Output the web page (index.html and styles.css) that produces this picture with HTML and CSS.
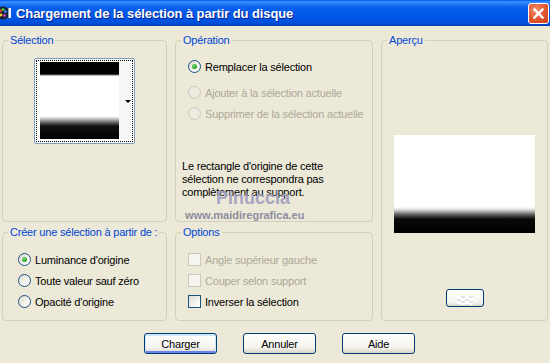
FILE: index.html
```html
<!DOCTYPE html>
<html lang="fr">
<head>
<meta charset="utf-8">
<title>Chargement de la sélection à partir du disque</title>
<link rel="stylesheet" href="styles.css">
</head>
<body>
<div class="window">
  <div class="titlebar">
    <span class="app-icon">
      <svg width="14" height="16" viewBox="0 0 14 16">
        <circle cx="5" cy="8" r="6.5" fill="#1b1f2e"/>
        <circle cx="2.5" cy="6" r="1.6" fill="#e23a3a"/>
        <circle cx="5" cy="4.5" r="1.5" fill="#3fcf3f"/>
        <circle cx="7.5" cy="6.5" r="1.5" fill="#3f7cff"/>
        <circle cx="3" cy="10" r="1.4" fill="#f0d030"/>
        <circle cx="6.5" cy="10.5" r="1.4" fill="#d040d0"/>
        <rect x="10" y="3" width="3" height="10" fill="#f4f4f4"/>
        <rect x="10" y="3" width="1" height="10" fill="#9aa4b8"/>
      </svg>
    </span>
    <span class="title">Chargement de la sélection à partir du disque</span>
    <span class="close">
      <svg width="11" height="11" viewBox="0 0 11 11"><path d="M1.5 1.5 L9.5 9.5 M9.5 1.5 L1.5 9.5" stroke="#fff" stroke-width="2.4" stroke-linecap="square"/></svg>
    </span>
  </div>

  <div class="groups">
    <fieldset class="group g-sel">
      <legend>Sélection</legend>
      <div class="thumb">
        <div class="focus">
          <div class="thumb-img"></div>
          <div class="thumb-strip"><span class="arrow"></span></div>
        </div>
      </div>
    </fieldset>

    <fieldset class="group g-op">
      <legend>Opération</legend>
      <div class="list op-list">
        <div class="row first"><span class="radio checked"></span><span>Remplacer la sélection</span></div>
        <div class="row disabled"><span class="radio"></span><span>Ajouter à la sélection actuelle</span></div>
        <div class="row disabled"><span class="radio"></span><span>Supprimer de la sélection actuelle</span></div>
      </div>
      <p class="note">Le rectangle d'origine de cette<br>sélection ne correspondra pas<br>complètement au support.</p>
      <span class="wm-name">Pinuccia</span>
      <span class="wm-url">www.maidiregrafica.eu</span>
    </fieldset>

    <fieldset class="group g-prev">
      <legend>Aperçu</legend>
      <div class="preview"></div>
      <div class="mini-btn"><span class="checker"></span></div>
    </fieldset>

    <fieldset class="group g-create">
      <legend>Créer une sélection à partir de :</legend>
      <div class="list create-list">
        <div class="row"><span class="radio checked"></span><span>Luminance d'origine</span></div>
        <div class="row"><span class="radio"></span><span>Toute valeur sauf zéro</span></div>
        <div class="row"><span class="radio"></span><span>Opacité d'origine</span></div>
      </div>
    </fieldset>

    <fieldset class="group g-opt">
      <legend>Options</legend>
      <div class="list opt-list">
        <div class="row disabled"><span class="check"></span><span>Angle supérieur gauche</span></div>
        <div class="row disabled"><span class="check"></span><span>Couper selon support</span></div>
        <div class="row"><span class="check"></span><span>Inverser la sélection</span></div>
      </div>
    </fieldset>
  </div>

  <div class="buttons">
    <span class="btn default">Charger</span>
    <span class="btn">Annuler</span>
    <span class="btn">Aide</span>
  </div>
</div>
</body>
</html>
```

FILE: styles.css
```css
* { box-sizing: border-box; }
html, body { margin: 0; padding: 0; }
body {
  width: 550px;
  height: 363px;
  overflow: hidden;
  background: #ECE9D8;
  font-family: "Liberation Sans", Arial, sans-serif;
  font-size: 11px;
  letter-spacing: -0.2px;
  color: #000;
}
.window { width: 550px; height: 363px; background: #ECE9D8; }

.titlebar {
  height: 26px;
  display: flex;
  align-items: center;
  background: linear-gradient(to bottom, #0058EE 0%, #3D93FF 8%, #2A7DF8 14%, #0660ED 30%, #0055E5 70%, #0050DA 88%, #003FB8 100%);
  color: #fff;
}
.app-icon { width: 14px; height: 16px; margin-left: -2px; display: flex; }
.title {
  flex: 1;
  margin-left: 4px;
  font-weight: bold;
  font-size: 13px;
  letter-spacing: -0.1px;
  text-shadow: 1px 1px 0 #0A1E8C;
}
.close {
  width: 21px;
  height: 21px;
  margin-right: 1px;
  border: 1px solid #fff;
  border-radius: 3px;
  background: radial-gradient(circle at 35% 30%, #F3906A 0%, #E45C34 45%, #CC3F18 100%);
  display: flex;
  align-items: center;
  justify-content: center;
}

.groups {
  display: grid;
  grid-template-columns: 165px 198px 167px;
  grid-template-rows: 188px 95px;
  column-gap: 8px;
  row-gap: 4px;
  padding: 8px 0 0 2px;
}
.group {
  margin: 0;
  padding: 0;
  min-width: 0;
  border: 1px solid #D0D0BF;
  border-radius: 4px;
}
.group legend {
  margin-left: 5px;
  padding: 0 2px;
  color: #0046D5;
  line-height: 12px;
  white-space: nowrap;
}
.g-sel { grid-column: 1; grid-row: 1; }
.g-op { grid-column: 2; grid-row: 1; position: relative; }
.g-prev { grid-column: 3; grid-row: 1 / span 2; }
.g-create { grid-column: 1; grid-row: 2; }
.g-opt { grid-column: 2; grid-row: 2; }

/* thumbnail */
.thumb {
  width: 101px;
  height: 86px;
  margin: 12px 0 0 31px;
  border: 1px solid #7F9DB9;
  border-radius: 2px;
  background: #fff;
  padding: 1px;
}
.focus {
  width: 97px;
  height: 82px;
  border: 1px dotted #000;
  display: flex;
  padding: 1px 0 0 3px;
}
.thumb-img {
  width: 79px;
  height: 77px;
  background: linear-gradient(to bottom, #000 0, #000 12px, #777 13px, #fff 14px, #fff 54px, #d8d8d8 56px, #707070 60px, #111 64px, #000 100%);
}
.thumb-strip {
  width: 12px;
  height: 77px;
  background: #F6F6F6;
  display: flex;
  align-items: center;
  justify-content: flex-end;
}
.arrow {
  width: 0;
  height: 0;
  border-left: 3px solid transparent;
  border-right: 3px solid transparent;
  border-top: 3px solid #000;
  margin-top: 1px;
}

/* rows */
.row { height: 21px; display: flex; align-items: center; gap: 4px; white-space: nowrap; }
.row.disabled { color: #ACA899; }
.op-list { padding: 10px 0 0 12px; }
.op-list .row.first { margin-bottom: 5px; }
.create-list { padding: 11px 0 0 15px; }
.opt-list { padding: 11px 0 0 12px; }

.radio {
  flex: none;
  width: 13px;
  height: 13px;
  border-radius: 50%;
  border: 1px solid #1C5180;
  background: linear-gradient(135deg, #DCD8CB 0%, #F6F5F1 60%, #FFFFFF 100%);
  display: flex;
  align-items: center;
  justify-content: center;
}
.radio.checked::after {
  content: "";
  width: 5px;
  height: 5px;
  border-radius: 50%;
  background: radial-gradient(circle at 40% 35%, #7EE07E 0%, #2AA82A 60%, #1C8A1C 100%);
}
.row.disabled .radio {
  border-color: #CAC8BB;
  background: #EDEAE0;
}
.check {
  flex: none;
  width: 13px;
  height: 13px;
  border: 1px solid #1C5180;
  background: linear-gradient(135deg, #DCDCD5 0%, #F4F4F0 60%, #FFFFFF 100%);
}
.row.disabled .check {
  border-color: #CAC8BB;
  background: #F5F4EE;
}

.note {
  margin: 36px 0 0 6px;
  line-height: 13px;
}
.wm-name {
  position: absolute;
  left: 40px;
  top: 143px;
  font-size: 18px;
  font-weight: bold;
  line-height: 18px;
  letter-spacing: 0;
  color: #A19FC0;
  opacity: 0.92;
}
.wm-url {
  position: absolute;
  left: 9px;
  top: 163px;
  font-size: 11px;
  font-weight: bold;
  line-height: 13px;
  letter-spacing: 0;
  color: #8E8D9E;
}

/* preview */
.preview {
  width: 141px;
  height: 98px;
  margin: 89px auto 0;
  background: linear-gradient(to bottom, #fff 0, #fff 72px, #d4d4d4 75px, #555 80px, #0a0a0a 84px, #000 100%);
}
.mini-btn {
  width: 38px;
  height: 18px;
  margin: 56px auto 0;
  border: 1px solid #003C74;
  border-radius: 3px;
  background: linear-gradient(to bottom, #FFFFFF 0%, #F4F3EE 80%, #D8D2C6 100%);
  display: flex;
  justify-content: center;
  align-items: flex-end;
}
.checker {
  width: 16px;
  height: 9px;
  margin-bottom: 1px;
  background: repeating-conic-gradient(#E2E2E2 0 25%, #FFFFFF 0 50%) 0 0 / 8px 5px;
}

/* bottom buttons */
.buttons {
  display: flex;
  gap: 26px;
  padding: 12px 0 0 144px;
}
.btn {
  width: 73px;
  height: 21px;
  border: 1px solid #003C74;
  border-radius: 3px;
  background: linear-gradient(to bottom, #FFFFFF 0%, #F5F4EF 70%, #E3DFD5 90%, #D6D0C5 100%);
  display: flex;
  align-items: center;
  justify-content: center;
}
.btn.default {
  box-shadow: inset 0 1px 0 1px #CEE7FF, inset 0 -1px 0 1px #6982EE;
}
```
